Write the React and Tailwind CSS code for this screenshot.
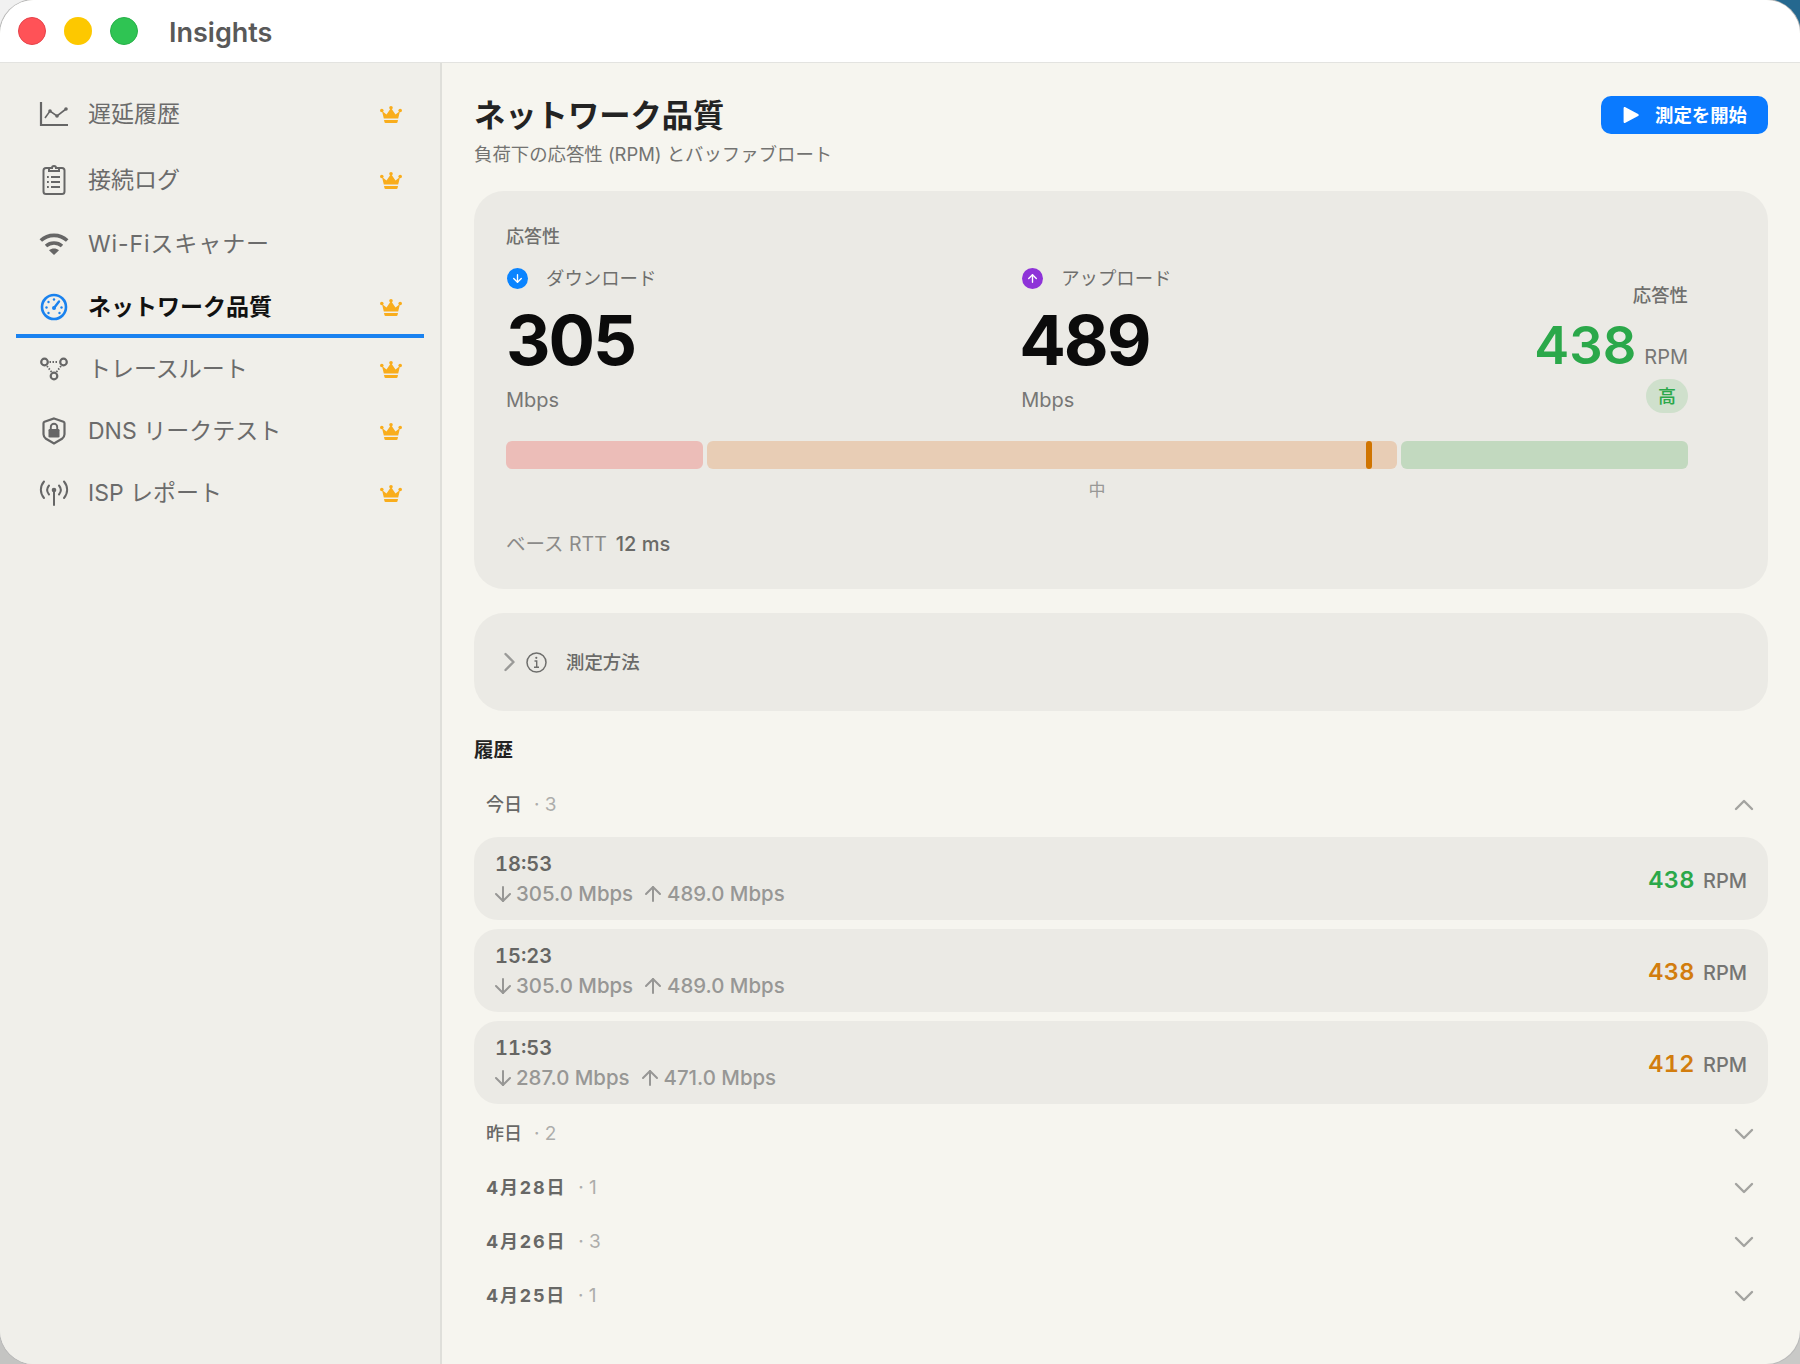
import { ArrowDown, ArrowUp } from 'lucide-react';

const navGray = '#666666';

function ChartIcon({ color }) {
  return (
    <svg width="30" height="26" viewBox="0 0 30 26" fill="none" stroke={color}>
      <path d="M2 1v23h27" strokeWidth="2.2" />
      <path d="M6 17l5-7 7 5 9-7" strokeWidth="1.6" />
      <circle cx="11" cy="10" r="1.8" fill={color} stroke="none" />
      <circle cx="18" cy="15" r="1.8" fill={color} stroke="none" />
      <circle cx="27" cy="8" r="1.8" fill={color} stroke="none" />
    </svg>
  );
}

function ClipboardIcon({ color }) {
  return (
    <svg width="24" height="32" viewBox="0 0 24 32" fill="none" stroke={color}>
      <path d="M7 4H4a2.5 2.5 0 0 0-2.5 2.5v21A2.5 2.5 0 0 0 4 30h16a2.5 2.5 0 0 0 2.5-2.5v-21A2.5 2.5 0 0 0 20 4h-3" strokeWidth="2" />
      <path d="M7 7V4h3a2 2 0 0 1 4 0h3v3z" strokeWidth="2" />
      <path d="M9 13h9M9 18h9M9 23h9" strokeWidth="2" />
      <path d="M5 13h1.8M5 18h1.8M5 23h1.8" strokeWidth="2" />
    </svg>
  );
}

function WifiIcon({ color }) {
  return (
    <svg width="30" height="24" viewBox="0 0 30 24" fill="none" stroke={color}>
      <path d="M1.8 8.5C9 1.6 21 1.6 28.2 8.5" strokeWidth="3.6" />
      <path d="M7 14c4.5-4 11.500-4 16 0" strokeWidth="3.6" />
      <path d="M15 23l-5-4.800c3-2.300 7-2.300 10 0z" fill={color} stroke="none" />
    </svg>
  );
}

function GaugeIcon() {
  return (
    <svg width="28" height="28" viewBox="0 0 28 28" fill="none" stroke="#1a82ee">
      <circle cx="14" cy="14" r="12" strokeWidth="2.6" />
      <path d="M14 15l5-6.500" strokeWidth="2.4" strokeLinecap="round" />
      <circle cx="14" cy="15" r="2" fill="#1a82ee" stroke="none" />
      <circle cx="14" cy="6.500" r="1.200" fill="#1a82ee" stroke="none" />
      <circle cx="8.500" cy="9" r="1.200" fill="#1a82ee" stroke="none" />
      <circle cx="6.500" cy="14.500" r="1.200" fill="#1a82ee" stroke="none" />
      <circle cx="21.500" cy="14.500" r="1.200" fill="#1a82ee" stroke="none" />
      <circle cx="8.500" cy="20" r="1.200" fill="#1a82ee" stroke="none" />
      <circle cx="19.500" cy="20" r="1.200" fill="#1a82ee" stroke="none" />
    </svg>
  );
}

function RouteIcon({ color }) {
  return (
    <svg width="30" height="26" viewBox="0 0 30 26" fill="none" stroke={color}>
      <circle cx="5.500" cy="6" r="3.300" strokeWidth="2.200" />
      <circle cx="24.500" cy="6" r="3.300" strokeWidth="2.200" />
      <circle cx="15" cy="20" r="3.300" strokeWidth="2.200" />
      <path d="M10.500 6h9M8 10l4.500 6M22 10l-4.500 6" strokeWidth="1.800" strokeDasharray="1.500 1.500" />
    </svg>
  );
}

function ShieldIcon({ color }) {
  return (
    <svg width="24" height="28" viewBox="0 0 24 28" fill="none" stroke={color}>
      <path d="M12 1.500l9.500 3.300c.7.300 1 .8 1 1.500v11c0 2-1 3.400-2.500 4.500L12 26.500l-8-4.700C2.500 20.700 1.500 19.300 1.500 17.300v-11c0-.7.300-1.200 1-1.500z" strokeWidth="2.200" />
      <path d="M8.800 12.500V10a3.200 3.200 0 0 1 6.400 0v2.500" strokeWidth="1.900" />
      <rect x="6.500" y="12" width="11" height="8.500" rx="1.300" fill={color} stroke="none" />
    </svg>
  );
}

function AntennaIcon({ color }) {
  return (
    <svg width="30" height="26" viewBox="0 0 30 26" fill="none" stroke={color} strokeLinecap="round">
      <path d="M5 1.500C.8 6.500.8 13 5 18" strokeWidth="2" />
      <path d="M25 1.500c4.200 5 4.200 11.500 0 16.500" strokeWidth="2" />
      <path d="M10 5.500c-2.500 3-2.500 6 0 9" strokeWidth="2" />
      <path d="M20 5.500c2.500 3 2.500 6 0 9" strokeWidth="2" />
      <path d="M15 11v14" strokeWidth="2" />
      <circle cx="15" cy="10" r="2.300" fill={color} stroke="none" />
    </svg>
  );
}

function Crown() {
  return (
    <svg width="22" height="18" viewBox="0 0 22 18" fill="#f9ad1c" className="mt-[2px] shrink-0">
      <circle cx="11" cy="1.800" r="1.800" />
      <circle cx="1.800" cy="4.500" r="1.800" />
      <circle cx="20.200" cy="4.500" r="1.800" />
      <path d="M2 5l4.500 3.500L11 2l4.500 6.500L20 5l-1.800 7.500H3.800z" />
      <path d="M4 14h14l-.5 2.200c-.1.500-.5.800-1 .8H5.500c-.5 0-.9-.3-1-.8z" />
    </svg>
  );
}

function InfoIcon() {
  return (
    <svg width="21" height="21" viewBox="0 0 21 21" fill="none" stroke="#6e6e6c">
      <circle cx="10.500" cy="10.500" r="9.500" strokeWidth="1.500" />
      <path d="M8.500 9h2.200v6M8 15.200h5" strokeWidth="1.400" />
      <circle cx="10.300" cy="5.800" r="1.100" fill="#6e6e6c" stroke="none" />
    </svg>
  );
}

function Chevron({ up }) {
  return (
    <svg width="20" height="12" viewBox="0 0 20 12" fill="none" stroke="#a3a3a0" strokeWidth="2.400" strokeLinecap="round" strokeLinejoin="round">
      <path d={up ? 'M2 10l8-8 8 8' : 'M2 2l8 8 8-8'} />
    </svg>
  );
}

function NavItem({ icon, label, crown = true, active, className, labelClass = '' }) {
  return (
    <div className={`ml-[16px] flex w-[408px] items-center pl-[22px] pr-[22px] ${className}`}>
      <span className="flex w-[32px] shrink-0 justify-center">{icon}</span>
      <span className={`ml-[18px] flex-1 text-[23px] leading-[32px] ${active ? 'font-semibold text-[#111]' : 'text-[#6b6b6b]'} ${labelClass}`}>{label}</span>
      {crown && <Crown />}
    </div>
  );
}

function Metric({ label, value, bg, up, width, valueClass = '' }) {
  return (
    <div className={width}>
      <div className="flex h-[24px] items-center">
        <span className={`ml-[1px] flex h-[21px] w-[21px] items-center justify-center rounded-full text-white ${bg}`}>
          {up ? <ArrowUp size={13} strokeWidth={2.5} /> : <ArrowDown size={13} strokeWidth={2.5} />}
        </span>
        <span className="ml-[18px] text-[18.4px] leading-[24px] text-[#6f6f6d]">{label}</span>
      </div>
      <div className={`mt-[15px] text-[69px] font-bold leading-[70px] tracking-[-2px] text-[#0b0b0b] ${valueClass}`}>{value}</div>
      <div className="mt-[11px] text-[20px] leading-[28px] text-[#777775]">Mbps</div>
    </div>
  );
}

function HistoryRow({ time, down, up, rpm, color }) {
  return (
    <div className="flex h-[83px] items-center justify-between rounded-[24px] bg-[#ebeae5] pl-[22px] pr-[21px]">
      <div>
        <div className="-ml-[1px] text-[20px] font-semibold leading-[26px] tabular-nums text-[#666664]">{time}</div>
        <div className="mt-[4px] flex h-[26px] items-center text-[20.4px] font-medium leading-[26px] text-[#979795]">
          <ArrowDown size={24} strokeWidth={2} className="-ml-[5px]" />
          <span className="ml-[1px]">{down} Mbps</span>
          <ArrowUp size={24} strokeWidth={2} className="ml-[8px]" />
          <span className="ml-[2px]">{up} Mbps</span>
        </div>
      </div>
      <div className="flex items-baseline pt-[4px]">
        <span className={`text-[23.5px] font-semibold leading-[30px] tracking-[0.4px] tabular-nums ${color}`}>{rpm}</span>
        <span className="ml-[8px] text-[20px] font-medium leading-[30px] text-[#757573]">RPM</span>
      </div>
    </div>
  );
}

function GroupHeader({ label, count, open, bold }) {
  return (
    <div className="flex h-[54px] items-center justify-between pl-[12px] pr-[14px]">
      <div className="flex items-center text-[18px] leading-[24px]">
        <span className={`text-[#686866] ${bold ? 'font-bold tracking-[1.8px]' : 'font-medium'}`}>{label}</span>
        <span className="ml-[12px] text-[19px] text-[#adadab]">· {count}</span>
      </div>
      <Chevron up={open} />
    </div>
  );
}

export default function App() {
  return (
    <div className="relative h-[1364px] w-[1800px] overflow-hidden font-['Inter','Noto_Sans_CJK_JP',sans-serif]">
      {/* wallpaper showing behind the rounded window corners */}
      <div className="absolute left-0 top-0 h-[40px] w-[40px] bg-[#f1f1f1]" />
      <div className="absolute right-0 top-0 h-[40px] w-[40px] bg-[#25688f]" />
      <div className="absolute bottom-0 left-0 h-[40px] w-[40px] bg-[#c4c4c2]" />
      <div className="absolute bottom-0 right-0 h-[40px] w-[40px] bg-[#c9c9c7]" />

      <div className="relative flex h-full w-full flex-col overflow-hidden rounded-[34px] bg-[#f6f5ef] shadow-[0_0_0_1px_#b9b9b9]">
        <div className="flex h-[63px] shrink-0 items-center border-b border-[#e3e3e0] bg-white pl-[18px]">
          <span className="h-[28px] w-[28px] rounded-full border border-[#e5434a] bg-[#ff5257]" />
          <span className="ml-[18px] h-[28px] w-[28px] rounded-full bg-[#fdc800]" />
          <span className="ml-[18px] h-[28px] w-[28px] rounded-full border border-[#27b049] bg-[#2fc453]" />
          <span className="ml-[31px] pt-[3px] text-[27px] font-semibold leading-[32px] text-[#595959]">Insights</span>
        </div>

        <div className="flex min-h-0 flex-1">
          <aside className="w-[442px] shrink-0 border-r-2 border-[#dfdfda] bg-[#f0efea] pt-[18px]">
            <NavItem className="h-[66px]" icon={<ChartIcon color={navGray} />} label="遅延履歴" />
            <NavItem className="h-[65px]" icon={<ClipboardIcon color={navGray} />} label="接続ログ" />
            <NavItem className="h-[64px]" icon={<WifiIcon color={navGray} />} label="Wi-Fiスキャナー" labelClass="tracking-[0.9px]" crown={false} />
            <NavItem className="h-[58px] pt-[3px]" icon={<GaugeIcon />} label="ネットワーク品質" active />
            <div className="ml-[16px] h-[4px] w-[408px] bg-[#1a82f0]" />
            <NavItem className="h-[62px]" icon={<RouteIcon color={navGray} />} label="トレースルート" />
            <NavItem className="h-[62px]" icon={<ShieldIcon color={navGray} />} label="DNS リークテスト" />
            <NavItem className="h-[62px]" icon={<AntennaIcon color={navGray} />} label="ISP レポート" />
          </aside>

          <main className="min-w-0 flex-1 pl-[32px] pr-[32px] pt-[33px]">
            <div className="flex items-start justify-between">
              <div>
                <h1 className="text-[31.3px] font-semibold leading-[40px] text-[#232323]">ネットワーク品質</h1>
                <p className="mt-[6px] text-[18.4px] leading-[24px] text-[#737371]">負荷下の応答性 (RPM) とバッファブロート</p>
              </div>
              <button className="flex h-[38px] w-[167px] items-center rounded-[10px] bg-[#0a7aff] pl-[21px] text-white">
                <svg width="18" height="18" viewBox="0 0 16 17" fill="white"><path d="M1 2.200c0-1 .9-1.500 1.700-1l12 6.300c.8.400.8 1.500 0 2l-12 6.300c-.8.500-1.700 0-1.700-1z" /></svg>
                <span className="ml-[15px] text-[18.4px] font-semibold leading-[24px]">測定を開始</span>
              </button>
            </div>

            <section className="mt-[25px] h-[398px] rounded-[30px] bg-[#ebeae5] pl-[32px] pr-[80px] pt-[34px]">
              <div className="text-[18px] font-medium leading-[24px] text-[#6f6f6d]">応答性</div>
              <div className="mt-[17px] flex">
                <Metric width="w-[519px]" label="ダウンロード" value="305" bg="bg-[#0a84ff]" />
                <Metric width="w-[517px]" label="アップロード" value="489" bg="bg-[#8e33d8]" valueClass="-ml-[2px]" up />
                <div className="ml-auto flex flex-col items-end pt-[17px]">
                  <div className="text-[18.4px] font-medium leading-[24px] text-[#6f6f6d]">応答性</div>
                  <div className="mt-[10px] flex h-[56px] items-baseline">
                    <span className="text-[52.5px] font-semibold leading-[56px] text-[#2ba84a]">438</span>
                    <span className="ml-[8px] text-[20px] leading-[28px] text-[#777775]">RPM</span>
                  </div>
                  <div className="mt-[6px] flex h-[34px] w-[42px] items-center justify-center rounded-full bg-[#cfe0cc] text-[18px] font-medium text-[#2ba84a]">高</div>
                </div>
              </div>
              <div className="relative mt-[27px] flex h-[28px] gap-[4px]">
                <div className="w-[197px] rounded-[6px] bg-[#ecbdb8]" />
                <div className="w-[690px] rounded-[6px] bg-[#e8cdb5]" />
                <div className="flex-1 rounded-[6px] bg-[#c2d9bf]" />
                <div className="absolute left-[860px] top-0 h-full w-[6px] rounded-[3px] bg-[#d07400]" />
              </div>
              <div className="mt-[11px] text-center text-[17px] leading-[20px] text-[#989896]">中</div>
              <div className="mt-[30px] flex text-[19.5px] leading-[28px]">
                <span className="text-[#8b8b89]">ベース RTT</span>
                <span className="ml-[9px] text-[20px] font-medium text-[#6a6a68]">12 ms</span>
              </div>
            </section>

            <section className="mt-[24px] flex h-[98px] items-center rounded-[30px] bg-[#ebeae5] pl-[29px]">
              <svg width="13" height="20" viewBox="0 0 13 20" fill="none" stroke="#9a9a98" strokeWidth="2.400" strokeLinecap="round" strokeLinejoin="round"><path d="M2.500 2l8 8-8 8" /></svg>
              <span className="ml-[10px]"><InfoIcon /></span>
              <span className="ml-[19px] text-[18.4px] font-medium leading-[24px] text-[#6a6a68]">測定方法</span>
            </section>

            <h2 className="mt-[27px] text-[19.5px] font-bold leading-[24px] text-[#232323]">履歴</h2>
            <div className="mt-[16px]">
              <GroupHeader label="今日" count="3" open />
              <div className="mt-[5px] flex flex-col gap-[9px]">
                <HistoryRow time="18:53" down="305.0" up="489.0" rpm="438" color="text-[#2ba84a]" />
                <HistoryRow time="15:23" down="305.0" up="489.0" rpm="438" color="text-[#d27d0e]" />
                <HistoryRow time="11:53" down="287.0" up="471.0" rpm="412" color="text-[#d27d0e]" />
              </div>
              <div className="mt-[3px]">
                <GroupHeader label="昨日" count="2" />
                <GroupHeader label="4月28日" count="1" bold />
                <GroupHeader label="4月26日" count="3" bold />
                <GroupHeader label="4月25日" count="1" bold />
              </div>
            </div>
          </main>
        </div>
      </div>
    </div>
  );
}
